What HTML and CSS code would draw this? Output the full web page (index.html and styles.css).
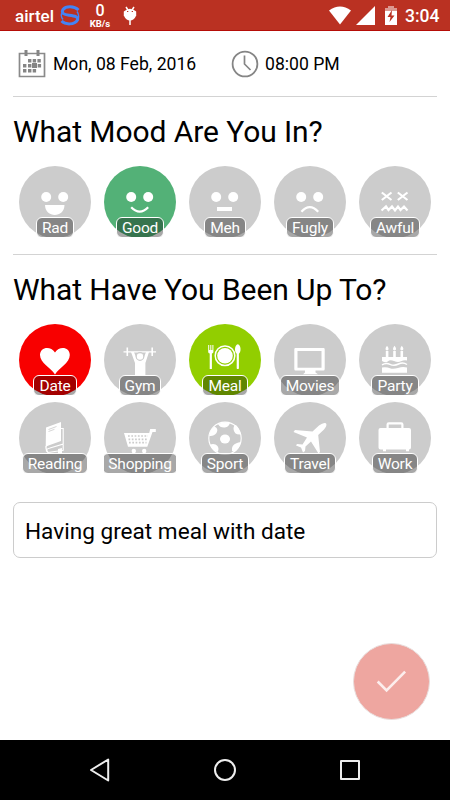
FILE: index.html
```html
<!DOCTYPE html>
<html lang="en">
<head>
<meta charset="utf-8">
<title>Mood diary</title>
<link rel="stylesheet" href="styles.css">
</head>
<body>
<div class="screen">
  <header class="status">
    <span class="carrier">airtel</span>
    <svg class="swirl" width="20" height="21" viewBox="0 0 20 21" fill="none" stroke="#4384f5" stroke-width="3"><path d="M18.500 5C14 .8 6 .8 3 4.500C1 8.500 4 9.500 9 10.200C15 11 18.500 11.500 17.500 15C14.500 20 5.500 20 1.500 16"/><path d="M1.800 8C.8 10 1.500 12.500 3 14.500M18.300 13.500C19 11 18.500 8.500 17 6.500" stroke-width="1.400"/></svg>
    <span class="speed"><b>0</b><small>KB/s</small></span>
    <svg class="droid" width="14" height="20" viewBox="0 0 14 20"><path d="M3 1l2 3M11 1L9 4M7 13v6" stroke="#fff" stroke-width="1.500"/><path d="M.8 5.500Q7 0 13.200 5.500V9.500Q11 14.500 7 14.500T.8 9.500Z" fill="#fff"/><path d="M4 5.500h1.300M8.700 5.500H10" stroke="#ba3122"/></svg>
    <span class="spacer"></span>
    <svg class="wifi" width="22" height="19" viewBox="0 0 22 19"><path d="M0 4.500Q11-3.500 22 4.500L11 18.500Z" fill="#fff"/></svg>
    <svg class="signal" width="19" height="19" viewBox="0 0 19 19"><path d="M19 0V19H0Z" fill="#fff"/></svg>
    <svg class="battery" width="12" height="19" viewBox="0 0 12 19"><path d="M3 0h6v2h3v4H0V2h3z" fill="#dc9890"/><path d="M0 5h12v14H0z" fill="#fff"/><path d="M7 4L2.500 11H5.500L4.500 16L9.500 9.500H6.500Z" fill="#ba3122"/></svg>
    <span class="clock">3:04</span>
  </header>

  <main>
    <section class="when">
      <svg class="cal" width="28" height="28" viewBox="0 0 28 28"><path d="M1.500 3.500h25v23h-25z" fill="none" stroke="#8a8a8a" stroke-width="1.700"/><path d="M6.500 0h3v6h-3zM18.500 0h3v6h-3z" fill="#858585"/><path d="M10 9h3.400v3.400H10zM14.700 9h3.400v3.400h-3.400zM19.400 9h3.400v3.400h-3.400zM5 14h3.400v3.400H5zM10 14h3.400v3.400H10zM14 13h5v5h-5zM19.700 14h3.400v3.400h-3.400zM5 19h3.400v3.400H5zM10 19h3.400v3.400H10zM14.700 19h3.400v3.400h-3.400z" fill="#858585"/></svg>
      <span class="date">Mon, 08 Feb, 2016</span>
      <svg width="28" height="28" viewBox="0 0 28 28" fill="none" stroke="#858585"><circle cx="14" cy="14" r="12.400" stroke-width="1.800"/><path d="M13.500 5.500V14L19.500 20" stroke-width="1.700"/></svg>
      <span class="time">08:00 PM</span>
    </section>

    <section class="group moods">
      <h1>What Mood Are You In?</h1>
      <div class="grid">
        <div class="item"><svg class="icon" viewBox="0 0 72 72"><circle cx="27.200" cy="31" r="5"/><circle cx="44.200" cy="31" r="5"/><path d="M26 39h19.500c0 13.300-19.500 13.300-19.500 0z"/></svg><span class="label">Rad</span></div>
        <div class="item good"><svg class="icon" viewBox="0 0 72 72"><circle cx="27.200" cy="31" r="5"/><circle cx="44.200" cy="31" r="5"/><path class="line" d="M27.200 41.200Q35.700 50 44.200 41.200"/></svg><span class="label">Good</span></div>
        <div class="item"><svg class="icon" viewBox="0 0 72 72"><circle cx="27.200" cy="31" r="5"/><circle cx="44.200" cy="31" r="5"/><path d="M28 41h15v4H28z"/></svg><span class="label">Meh</span></div>
        <div class="item"><svg class="icon" viewBox="0 0 72 72"><circle cx="27.200" cy="31" r="5"/><circle cx="44.200" cy="31" r="5"/><path class="line" d="M27.400 45.700Q35.800 36.500 44.200 45.700"/></svg><span class="label">Fugly</span></div>
        <div class="item"><svg class="icon" viewBox="0 0 72 72"><path class="line" d="M22.800 26.500L32.500 34M32.500 26.500L22.800 34M38.800 26.500L48.500 34M48.500 26.500L38.800 34"/><path class="line" d="M22.500 44.500L27 40.500L29.500 44L33 40.500L36 44.500L39 40.500L41.500 44L45 40.500L48.500 44.500"/></svg><span class="label">Awful</span></div>
      </div>
    </section>

    <section class="group">
      <h1>What Have You Been Up To?</h1>
      <div class="grid">
        <div class="item love"><svg class="icon" viewBox="0 0 72 72"><path d="M36 50.500C32 44 21 39 21 31C21 23 31.500 21.500 36 28.500C40.500 21.500 50.800 23 50.800 31C50.800 39 40 44 36 50.500Z"/></svg><span class="label">Date</span></div>
        <div class="item"><svg class="icon" viewBox="0 0 72 72"><path d="M19.500 27.200h32.500v1.300H19.500zM22.500 23.500h1.600V32h-1.600zM47.400 23.500H49V32h-1.600z"/><path d="M27 28h3l2.500 6.500h7L42 28h3l-3.600 11v12H31V39z"/><circle class="head" cx="36" cy="32.500" r="3.800"/></svg><span class="label">Gym</span></div>
        <div class="item food"><svg class="icon" viewBox="0 0 72 72"><path d="M19.200 21h1v5h1.100v-5h1v5h1.100v-5h1v7q0 1-1.500 1.500V45h-2.200V29.500Q19.200 29 19.200 28z"/><circle cx="36" cy="31.700" r="7.800"/><circle class="thin" cx="36" cy="31.700" r="9.800"/><path d="M48.800 20.300C52 21 52.500 28 49.900 29.800V44.500q-1.100 1-2.200 0V29.800C45.100 28 45.600 21 48.800 20.300z"/></svg><span class="label">Meal</span></div>
        <div class="item"><svg class="icon" viewBox="0 0 72 72"><path fill-rule="evenodd" d="M21.500 24h28q1.200 0 1.200 1.200V45q0 1.500-1.200 1.500h-28q-1.200 0-1.200-1.500V25.200q0-1.200 1.200-1.200zM23.500 27v16.700h24V27zM31 46.500h10.500v2l2.500 1.800H29l2-1.800z"/></svg><span class="label">Movies</span></div>
        <div class="item"><svg class="icon" viewBox="0 0 72 72"><path d="M26.800 27h2.600v6h-2.600zM34.200 27h2.600v6h-2.600zM41.500 27h2.600v6h-2.600zM28 21.700q3.200 4-0 4.800q-3-.8 0-4.800zM35.500 21.700q3.200 4 0 4.800q-3-.8 0-4.800zM42.800 21.700q3.200 4 0 4.800q-3-.8 0-4.800z"/><path d="M23 33h25v3.500q-3-.7-6 .8t-7-.3t-6 .3t-6-.3z"/><path class="thin" d="M23 40.800q4-2.500 8-.5t8.500-.3t8.500.5"/><path d="M23 43.500q5-.5 8 .7t8-.3t9-.3v5.100H23z"/></svg><span class="label">Party</span></div>
        <div class="item"><svg class="icon" viewBox="0 0 72 72"><path d="M27 25.500L42 20V39L29.500 43.500Q27.500 44 26.700 45.500z"/><path class="fine" d="M42 26.500h2.200V42L31 46q-4.500 1-3.500 3.500M44.200 42v6.300L29 50.500Q26.500 48 27 44"/><path d="M39 47l4-1v6l-2-1-2 1z"/><path class="fold" d="M29.500 27.500l8-3M29.500 29.500l6-2.200"/></svg><span class="label">Reading</span></div>
        <div class="item"><svg class="icon" viewBox="0 0 72 72"><path d="M20 31h25.200L46.200 27h5.600v3h-3.300l-5.200 14.700H24z"/><path class="mesh" d="M24 34h20M24.500 37.300h18.500M25 40.600h17.500"/><circle cx="29.800" cy="49" r="2.200"/><circle cx="40.200" cy="49" r="2.200"/></svg><span class="label">Shopping</span></div>
        <div class="item"><svg class="icon" viewBox="0 0 72 72"><circle class="fine" cx="36" cy="36.300" r="16.200"/><ellipse cx="36" cy="37" rx="5" ry="4.500"/><path d="M29 22q6-3 12-1.200Q40 25 36 25.500Q31 26 29 22zM44.500 27q0-4 2.500-4q4 4 4.700 9.500Q45 33 44.500 27zM20.200 34q.5-5.500 5-9.500Q30 26 27.500 31Q25 34.500 20.200 34zM21 42.500q5-1.500 7.500 1.500Q30.500 47 28.500 50Q23 48 21 42.500zM43 49q-1-6 5-8q4-1.500 3.500.5Q50 47 45.500 50z"/></svg><span class="label">Sport</span></div>
        <div class="item"><svg class="icon" viewBox="0 0 72 72"><path d="M52 21.300Q49.500 20 45 23.500L38.500 29.500L21 28L19.500 30L33 35.500L28.500 42.500L23 42L22 43.500L27 45.500L29 50.500L31 49L31.500 44.500L37 39.500L44.500 51.500L46 50L44.200 33L50 27.500Q53.500 23.500 52 21.300z"/></svg><span class="label">Travel</span></div>
        <div class="item"><svg class="icon" viewBox="0 0 72 72"><path fill-rule="evenodd" d="M21.500 26h6v-3.500q0-2.200 2.200-2.200h12.600q2.200 0 2.200 2.200V26h5.500q2 0 2 2v17.500q0 2-2 2v1.700h-3v-1.700H27v1.700h-3v-1.700h-2.500q-2 0-2-2V28q0-2 2-2zM29.700 22.500V26h12.600v-3.500z"/></svg><span class="label">Work</span></div>
      </div>
    </section>

    <div class="note">Having great meal with date</div>
    <div class="actions"><button class="save" aria-label="Save"><svg width="75" height="75" viewBox="0 0 76 76"><path d="M24 38L33 47L51.800 28" fill="none" stroke="#fceeed" stroke-width="2.600"/></svg></button></div>
  </main>

  <nav>
    <svg width="22" height="24" viewBox="0 0 22 24"><path d="M19.200 1.500V22.500L2 12Z"/></svg>
    <svg width="22" height="24" viewBox="0 0 22 24"><circle cx="11" cy="12" r="10"/></svg>
    <svg width="22" height="24" viewBox="0 0 22 24"><path d="M2 3h18v18H2z"/></svg>
  </nav>
</div>
</body>
</html>
```
FILE: styles.css
```css
* { box-sizing: border-box; }
body { margin: 0; background: #fff; color: #000; font-family: Roboto, sans-serif; }
svg { display: block; flex: none; }
.screen { width: 450px; height: 800px; display: flex; flex-direction: column; overflow: hidden; }

.status { height: 31px; flex: none; display: flex; align-items: flex-start; padding: 0 10px 0 15px; background: #ba3122; border-bottom: 1px solid #b50d08; color: #fff; font-weight: 500; }
.carrier { width: 45px; font-size: 17px; line-height: 20px; margin-top: 6px; white-space: nowrap; }
.swirl { margin-top: 5px; }
.speed { width: 22px; margin: 3px 0 0 9px; display: flex; flex-direction: column; align-items: center; }
.speed b { font-size: 16px; line-height: 16px; font-weight: 500; }
.speed small { font-size: 9.500px; line-height: 9px; font-weight: 700; }
.droid { margin: 6px 0 0 12px; }
.spacer { flex: 1; }
.wifi { margin-top: 6px; }
.signal { margin: 6px 0 0 5px; }
.battery { margin: 6px 8px 0 10px; }
.clock { width: 35px; font-size: 17.500px; line-height: 20px; margin-top: 6px; white-space: nowrap; }

main { flex: 1; display: flex; flex-direction: column; padding: 0 13px; }
.when { height: 66px; flex: none; display: flex; align-items: center; padding-left: 5px; border-bottom: 1px solid #d3d3d3; font-size: 17.600px; }
.when span { padding-top: 1px; white-space: nowrap; }
.date { width: 178px; margin-left: 7px; }
.time { margin-left: 6px; }

.moods { height: 158px; border-bottom: 1px solid #d3d3d3; }
h1 { margin: 0; height: 69px; padding-top: 16.500px; font-size: 30px; line-height: 36px; letter-spacing: -.08px; font-weight: 400; white-space: nowrap; }
.grid { display: grid; grid-template-columns: repeat(5, 72px); gap: 7px 13px; padding-left: 6px; }
.item { --tint: #ccc; height: 71px; display: flex; flex-direction: column; align-items: center; overflow: hidden; }
.good { --tint: #53b177; }
.love { --tint: #f80000; }
.food { --tint: #92ce00; }
.icon { width: 72px; height: 72px; border-radius: 50%; background: var(--tint); fill: #fff; }
.line { fill: none; stroke: #fff; stroke-width: 2.200; }
.thin { fill: none; stroke: #fff; stroke-width: 1.500; }
.fine { fill: none; stroke: #fff; stroke-width: 1.100; }
.head { stroke: #ccc; stroke-width: 1.200; }
.fold { fill: none; stroke: #ccc; stroke-width: .8; }
.mesh { fill: none; stroke: #ccc; stroke-width: 1.700; stroke-dasharray: 1.700 1.600; }
.label { position: relative; flex: none; height: 21px; margin-top: -21px; padding: 0 5px; border: 1.500px solid #fff; border-radius: 6px; background: rgba(0, 0, 0, .34); color: #fff; font-size: 15.500px; line-height: 21px; letter-spacing: -.2px; white-space: nowrap; }

.note { height: 56px; flex: none; margin-top: 29px; padding: 0 11px; border: 1px solid #ccc; border-radius: 7px; font-size: 22.600px; line-height: 57px; }
.actions { margin-top: auto; padding: 0 7px 20px 0; display: flex; justify-content: flex-end; }
.save { width: 77px; height: 77px; padding: 0; border: 1px solid #e9dedd; border-radius: 50%; background: #eea6a0; }

nav { height: 60px; flex: none; display: flex; justify-content: center; align-items: center; gap: 103px; background: #000; }
nav svg { fill: none; stroke: #eee; stroke-width: 2; stroke-linejoin: round; }
```
